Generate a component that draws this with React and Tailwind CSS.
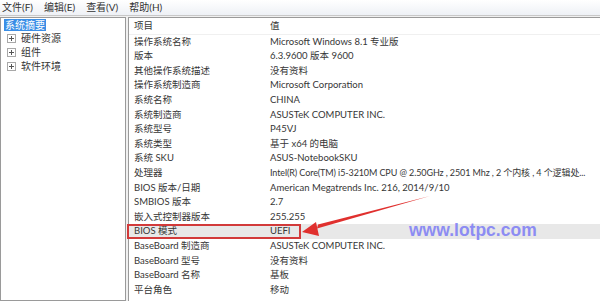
import React from 'react'

const FONT = { fontFamily: 'Lato, "Noto Sans CJK SC", sans-serif' }

const rows = [
  ['操作系统名称', 'Microsoft Windows 8.1 专业版'],
  ['版本', '6.3.9600 版本 9600'],
  ['其他操作系统描述', '没有资料'],
  ['操作系统制造商', 'Microsoft Corporation'],
  ['系统名称', 'CHINA'],
  ['系统制造商', 'ASUSTeK COMPUTER INC.'],
  ['系统型号', 'P45VJ'],
  ['系统类型', '基于 x64 的电脑'],
  ['系统 SKU', 'ASUS-NotebookSKU'],
  ['处理器', 'Intel(R) Core(TM) i5-3210M CPU @ 2.50GHz , 2501 Mhz , 2 个内核 , 4 个逻辑处...'],
  ['BIOS 版本/日期', 'American Megatrends Inc. 216, 2014/9/10'],
  ['SMBIOS 版本', '2.7'],
  ['嵌入式控制器版本', '255.255'],
  ['BIOS 模式', 'UEFI'],
  ['BaseBoard 制造商', 'ASUSTeK COMPUTER INC.'],
  ['BaseBoard 型号', '没有资料'],
  ['BaseBoard 名称', '基板'],
  ['平台角色', '移动'],
]

function Plus() {
  return (
    <svg width="9" height="9" viewBox="0 0 9 9" className="shrink-0">
      <rect x="0.5" y="0.5" width="8" height="8" fill="#fff" stroke="#a8a8a8" />
      <path d="M2 4.5h5M4.5 2v5" stroke="#555" strokeWidth="1" />
    </svg>
  )
}

export default function App() {
  return (
    <div className="relative w-[600px] h-[301px] overflow-hidden bg-white text-[9.5px] text-[#363636]" style={FONT}>
      <div className="flex h-[16px] items-center gap-[11px] pl-[2px] text-[10px] bg-gradient-to-b from-white to-[#eef1f6] border-b border-[#c8c8c8] text-[#333]">
        <span>文件(F)</span>
        <span>编辑(E)</span>
        <span>查看(V)</span>
        <span>帮助(H)</span>
      </div>

      <div className="flex h-[285px] pt-[1px] gap-[2px] bg-[#f0f0f0]">
        <div className="w-[126px] bg-white border border-[#9a9a9a] pt-[1px]">
          <div className="ml-[3px] w-fit bg-[#3a8ee6] px-[1px] text-white text-[10px] leading-[12px]">系统摘要</div>
          <div className="flex flex-col text-[10px]">
            {['硬件资源', '组件', '软件环境'].map((t) => (
              <div key={t} className="flex items-center gap-[5px] h-[14px] pl-[6px]">
                <Plus />
                <span>{t}</span>
              </div>
            ))}
          </div>
        </div>

        <div className="relative flex-1 bg-white border-l border-t border-[#9a9a9a]">
          <div className="grid grid-cols-[137px_1fr] h-[16.5px] pt-[1px] items-center border-b border-[#f0f0f0]">
            <span className="pl-[5px]">项目</span>
            <span className="pl-[4px]">值</span>
          </div>
          {rows.map(([k, v]) => (
            <div
              key={k}
              className={`grid grid-cols-[137px_1fr] h-[14.6px] items-center whitespace-nowrap ${k === 'BIOS 模式' ? 'bg-[#e8e8e8]' : ''}`}
            >
              <span className="pl-[5px]">{k}</span>
              <span className={`pl-[4px] overflow-hidden ${k === '处理器' ? 'text-[9px] tracking-[-0.1px]' : ''}`}>{v}</span>
            </div>
          ))}
        </div>
      </div>

      <div className="absolute left-[127px] top-[224px] w-[174px] h-[15px] border-2 border-[#d23a3a]" />

      <svg className="absolute left-0 top-0 pointer-events-none" width="600" height="301">
        <path d="M430 196 L318 224.5 L317 228.5 Z" fill="#e0302e" />
        <path d="M302 232 L316 222 L319 236 Z" fill="#e0302e" />
      </svg>

      <div
        className="absolute left-[409px] top-[220px] text-[17.5px] leading-[20px] font-bold text-[#7d7df5] opacity-85"
        style={{ fontFamily: '"Liberation Sans", Arial, sans-serif' }}
      >
        www.lotpc.com
      </div>
    </div>
  )
}
